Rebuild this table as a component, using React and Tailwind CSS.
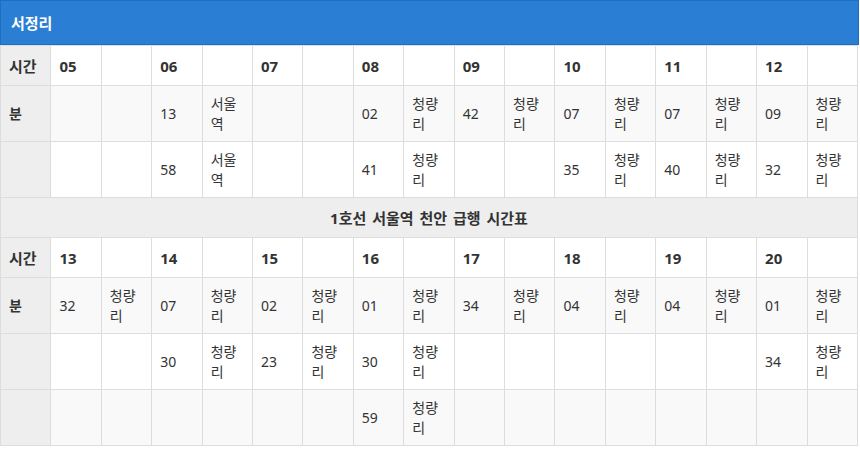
const hoursA = ['05', '06', '07', '08', '09', '10', '11', '12'];
const rowsA = [
  [['', ''], ['13', '서울역'], ['', ''], ['02', '청량리'], ['42', '청량리'], ['07', '청량리'], ['07', '청량리'], ['09', '청량리']],
  [['', ''], ['58', '서울역'], ['', ''], ['41', '청량리'], ['', ''], ['35', '청량리'], ['40', '청량리'], ['32', '청량리']],
];

const hoursB = ['13', '14', '15', '16', '17', '18', '19', '20'];
const rowsB = [
  [['32', '청량리'], ['07', '청량리'], ['02', '청량리'], ['01', '청량리'], ['34', '청량리'], ['04', '청량리'], ['04', '청량리'], ['01', '청량리']],
  [['', ''], ['30', '청량리'], ['23', '청량리'], ['30', '청량리'], ['', ''], ['', ''], ['', ''], ['34', '청량리']],
  [['', ''], ['', ''], ['', ''], ['59', '청량리'], ['', ''], ['', ''], ['', ''], ['', '']],
];

const cell = 'border border-[#dddddd] px-[8px] py-0 align-middle';

function HourRow({ hours }) {
  return (
    <tr className="h-[40px] bg-white">
      <td className={`${cell} bg-[#eeeeee] font-bold text-[15px]`}>시간</td>
      {hours.map((h) => [
        <td key={h} className={`${cell} font-bold text-[15px]`}>{h}</td>,
        <td key={h + 'b'} className={cell}></td>,
      ])}
    </tr>
  );
}

function MinuteRows({ rows }) {
  return rows.map((row, i) => (
    <tr key={i} className={`h-[56px] ${i % 2 === 0 ? 'bg-[#f9f9f9]' : 'bg-white'}`}>
      <td className={`${cell} bg-[#eeeeee] font-bold`}>{i === 0 ? '분' : ''}</td>
      {row.map(([min, dest], j) => [
        <td key={j} className={cell}>{min}</td>,
        <td key={j + 'd'} className={`${cell} py-[7px]`}>{dest}</td>,
      ])}
    </tr>
  ));
}

export default function App() {
  return (
    <div
      className="w-[859px] bg-white text-[14px] leading-[20px] text-[#333333]"
      style={{ fontFamily: '"Noto Sans", "Noto Sans CJK KR", sans-serif' }}
    >
      <div className="flex h-[45px] items-center border border-[#1f6fbf] bg-[#2a7fd4] px-[10px] text-[15px] font-bold text-white">
        서정리
      </div>
      <table className="w-[858px] table-fixed border-collapse">
        <tbody>
          <HourRow hours={hoursA} />
          <MinuteRows rows={rowsA} />
          <tr className="h-[40px] bg-[#eeeeee]">
            <td colSpan={17} className={`${cell} text-center text-[15px] font-bold [word-spacing:2px]`}>
              1호선 서울역 천안 급행 시간표
            </td>
          </tr>
          <HourRow hours={hoursB} />
          <MinuteRows rows={rowsB} />
        </tbody>
      </table>
    </div>
  );
}
